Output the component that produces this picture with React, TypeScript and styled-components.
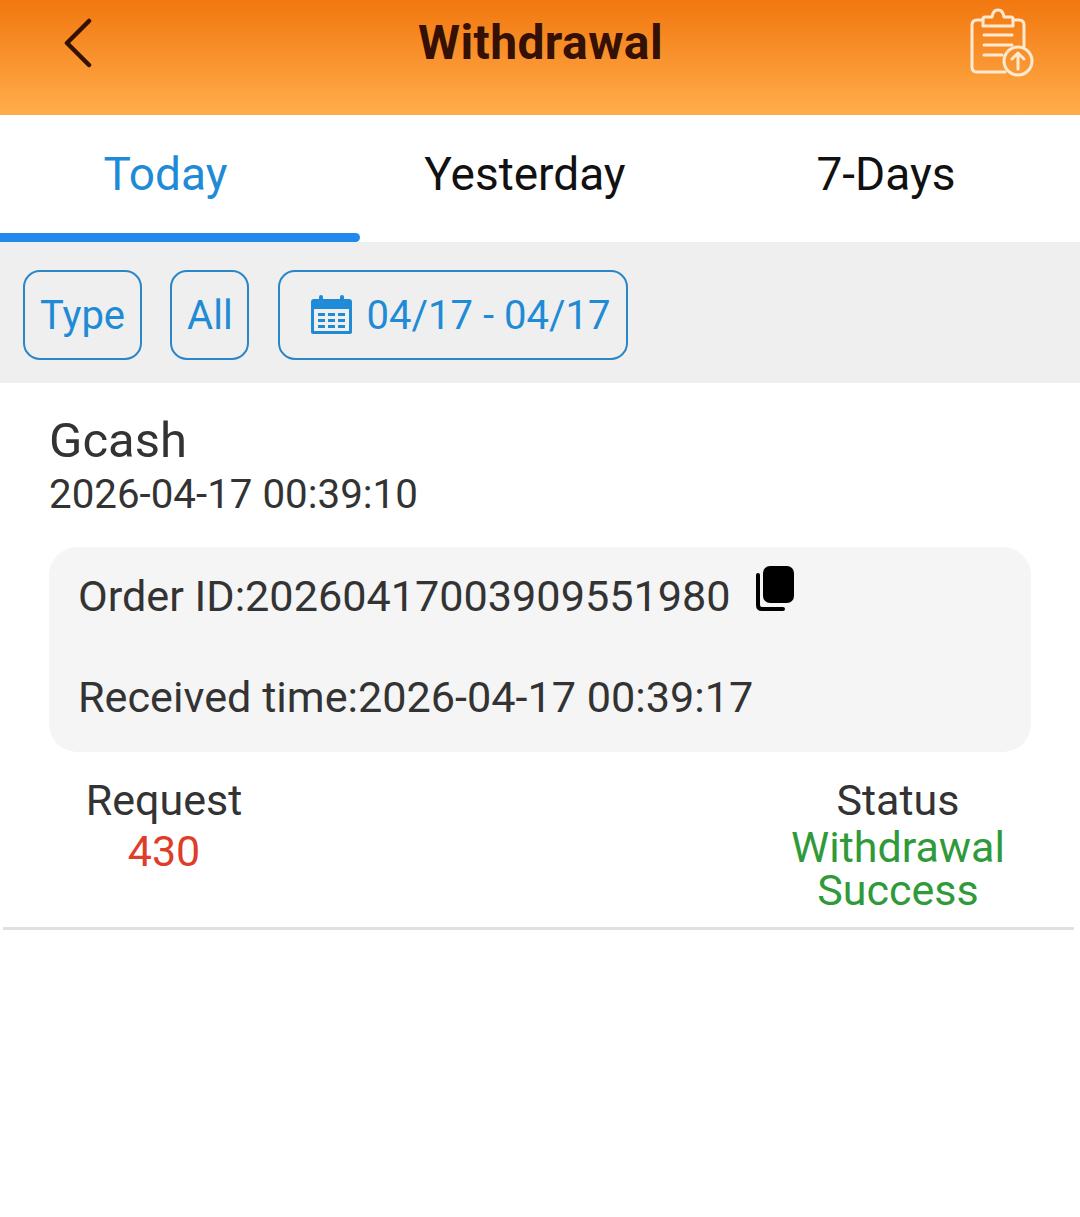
import React from 'react';
import styled, { createGlobalStyle } from 'styled-components';

const Global = createGlobalStyle`
  html, body { margin: 0; padding: 0; background: #fff; }
  body { font-family: Roboto, "Liberation Sans", sans-serif; }
`;
const Page = styled.div`
  width: 1080px; height: 1217px; overflow: hidden; background: #fff;
  display: flex; flex-direction: column;
`;
const Header = styled.header`
  height: 115px; flex: none; display: grid; grid-template-columns: 1fr auto 1fr; align-items: center;
  padding: 0 45px 0 62px; box-sizing: border-box;
  background: linear-gradient(180deg, #f2770f 0%, #ffae4b 100%);
`;
const HeaderTitle = styled.h1`
  margin: -30px 0 0; font-size: 48px; letter-spacing: 0.4px; font-weight: 700; color: #351004; line-height: 54px;
  transform: translateX(-8px);
`;
const BackIcon = styled.svg`width: 32px; height: 50px; margin-top: -30px; justify-self: start;`;
const RecordIcon = styled.svg`width: 66px; height: 70px; margin-top: -29px; justify-self: end;`;
const Tabs = styled.nav`height: 127px; flex: none; display: grid; grid-template-columns: 360px 338px 1fr; position: relative;`;
const Tab = styled.div<{ $active?: boolean; $shift: number }>`
  font-size: 46px; line-height: 118px; text-align: center; color: ${p => (p.$active ? '#1f8bd6' : '#111')};
  padding-right: ${p => p.$shift}px;
`;
const TabBar = styled.div`
  position: absolute; left: 0; bottom: 0; width: 360px; height: 9px; background: #2189ee; border-radius: 0 5px 5px 0;
`;
const FilterBar = styled.div`
  height: 141px; flex: none; box-sizing: border-box; background: #efefef; display: flex; align-items: center;
  padding: 5px 0 0 23px;
`;
const Chip = styled.div<{ $gap: number; $pad: number; $padRight?: number }>`
  height: 90px; box-sizing: border-box; border: 2px solid #2a86c8; border-radius: 17px; color: #1f8bd6;
  display: flex; align-items: center; font-size: 40px;
  padding: 0 ${p => p.$padRight ?? p.$pad}px 0 ${p => p.$pad}px; margin-right: ${p => p.$gap}px;
`;
const DateIcon = styled.svg`width: 41px; height: 40px; margin: 0 15px 0 31px;`;
const Record = styled.section`padding: 28px 6px 0 2px; display: flex; flex-direction: column;`;
const Method = styled.div`font-size: 49px; line-height: 58px; color: #333; padding: 1px 0 0 47px; margin-bottom: -1px;`;
const Time = styled.div`font-size: 40.3px; line-height: 48px; color: #333; padding: 2px 0 0 47px; margin-bottom: -2px;`;
const InfoCard = styled.div`
  margin: 30px 43px 0 47px; height: 205px; box-sizing: border-box; background: #f5f5f5; border-radius: 28px;
  padding: 25px 29px 0; color: #333; font-size: 43.2px; line-height: 50px;
`;
const OrderRow = styled.div`display: flex; align-items: flex-start; height: 101px;`;
const CopyIcon = styled.svg`width: 38px; height: 48px; margin: -9px 0 0 25px;`;
const Summary = styled.div`
  display: flex; justify-content: space-between; padding: 23px 56px 15px 0; border-bottom: 3px solid #e0e0e0;
  margin-left: 1px;
`;
const Col = styled.div<{ $w: number; $ml?: number }>`
  width: ${p => p.$w}px; margin-left: ${p => p.$ml ?? 0}px; text-align: center; font-size: 43px; color: #333;
`;
const Label = styled.div`line-height: 50px;`;
const Red = styled.div`color: #e03c2a; line-height: 52px;`;
const Green = styled.div`color: #2f9a3a; line-height: 43px; margin-top: 1px;`;

export default function App() {
  return (
    <Page>
      <Global />
      <Header>
        <BackIcon viewBox="0 0 32 50" fill="none">
          <path d="M27 3 L5 25 L27 47" stroke="#351004" strokeWidth="4.5" strokeLinecap="round" strokeLinejoin="round" />
        </BackIcon>
        <HeaderTitle>Withdrawal</HeaderTitle>
        <RecordIcon viewBox="0 0 66 70" fill="none" stroke="#ffe9d2" strokeWidth="3" strokeLinecap="round" strokeLinejoin="round">
          <path d="M14 12 H8 Q3 12 3 17 V59 Q3 64 8 64 H36" />
          <path d="M44 12 H50 Q55 12 55 17 V38" />
          <path d="M14 18 V11 Q14 9 16 9 H23 Q24 2 29 2 Q34 2 35 9 H42 Q44 9 44 11 V18 Z" />
          <path d="M15 27 H43 M15 37 H43 M15 47 H33" />
          <circle cx="49" cy="53" r="14" />
          <path d="M49 61 V46 M43 51 L49 45 L55 51" />
        </RecordIcon>
      </Header>
      <Tabs>
        <Tab $active $shift={29}>Today</Tab>
        <Tab $shift={8}>Yesterday</Tab>
        <Tab $shift={6}>7-Days</Tab>
        <TabBar />
      </Tabs>
      <FilterBar>
        <Chip $gap={28} $pad={15}>Type</Chip>
        <Chip $gap={29} $pad={15} $padRight={14}>All</Chip>
        <Chip $gap={0} $pad={0} $padRight={16}>
          <DateIcon viewBox="0 0 41 40">
            <path fill="#1f8bd6" d="M3 4 H8 V8 H12 V4 H29 V8 H33 V4 H38 Q41 4 41 7 V37 Q41 39 38 39 H3 Q0 39 0 37 V7 Q0 4 3 4 Z M3 14 V36 H38 V14 Z" />
            <rect x="8" y="0" width="4" height="9" rx="2" fill="#1f8bd6" />
            <rect x="29" y="0" width="4" height="9" rx="2" fill="#1f8bd6" />
            <path fill="#1f8bd6" d="M7 18 H14 V21 H7 Z M17 18 H24 V21 H17 Z M27 18 H34 V21 H27 Z M7 24 H14 V27 H7 Z M17 24 H24 V27 H17 Z M27 24 H34 V27 H27 Z M7 30 H14 V33 H7 Z M17 30 H24 V33 H17 Z M27 30 H34 V33 H27 Z" />
          </DateIcon>
          04/17 - 04/17
        </Chip>
      </FilterBar>
      <Record>
        <Method>Gcash</Method>
        <Time>2026-04-17 00:39:10</Time>
        <InfoCard>
          <OrderRow>
            Order ID:20260417003909551980
            <CopyIcon viewBox="0 0 38 48">
              <rect x="7" y="3" width="31" height="37" rx="7" fill="#000" />
              <path d="M2 12 V42 Q2 46 6 46 H27" fill="none" stroke="#000" strokeWidth="4" strokeLinecap="round" />
            </CopyIcon>
          </OrderRow>
          Received time:2026-04-17 00:39:17
        </InfoCard>
        <Summary>
          <Col $w={200} $ml={61}><Label>Request</Label><Red>430</Red></Col>
          <Col $w={240}><Label>Status</Label><Green>Withdrawal<br />Success</Green></Col>
        </Summary>
      </Record>
    </Page>
  );
}
